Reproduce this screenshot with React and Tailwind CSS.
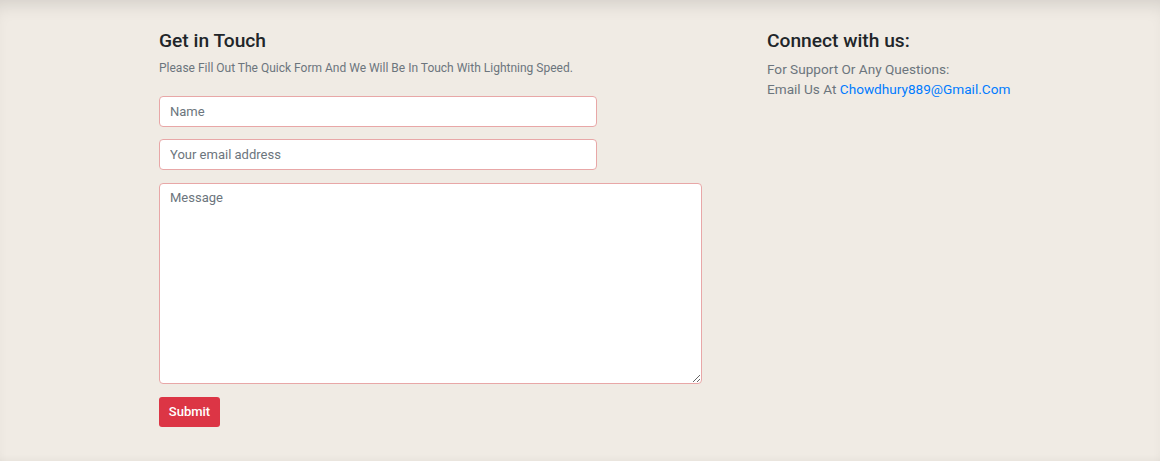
export default function App() {
  return (
    <div
      className="w-full h-[461px] bg-[#f0ebe4] shadow-[inset_0_14px_18px_-10px_rgba(0,0,0,0.13),inset_0_-6px_8px_-6px_rgba(0,0,0,0.06)] flex"
      style={{ fontFamily: "Roboto, 'Liberation Sans', sans-serif" }}
    >
      <div className="pl-[159px] pt-[29px] w-[702px] shrink-0 flex flex-col">
        <h3 className="text-[19.2px] leading-[24px] font-medium text-[#212529]">Get in Touch</h3>
        <p className="mt-[6px] text-[12px] leading-[18px] text-[#6c757d]">
          Please Fill Out The Quick Form And We Will Be In Touch With Lightning Speed.
        </p>
        <form className="mt-[19px] flex flex-col" onSubmit={(e) => e.preventDefault()}>
          <input
            type="text"
            placeholder="Name"
            className="w-[438px] h-[31px] bg-white border border-[#e8a7a7] rounded-[4px] px-[10px] text-[13px] text-[#495057] placeholder:text-[#6c757d] outline-none"
          />
          <input
            type="email"
            placeholder="Your email address"
            className="mt-[12px] w-[438px] h-[31px] bg-white border border-[#e8a7a7] rounded-[4px] px-[10px] text-[13px] text-[#495057] placeholder:text-[#6c757d] outline-none"
          />
          <textarea
            placeholder="Message"
            className="mt-[13px] w-[543px] h-[201px] bg-white border border-[#e8a7a7] rounded-[4px] px-[10px] py-[5px] text-[13px] leading-[18px] text-[#495057] placeholder:text-[#6c757d] outline-none"
          />
          <div className="mt-[13px]">
            <button
              type="submit"
              className="w-[61px] h-[30px] bg-[#dc3545] text-white text-[13px] font-medium rounded-[3px]"
            >
              Submit
            </button>
          </div>
        </form>
      </div>
      <div className="pl-[65px] pt-[29px] flex flex-col">
        <h3 className="text-[19.2px] leading-[24px] font-medium text-[#212529]">Connect with us:</h3>
        <div className="mt-[6px] text-[13.6px] leading-[20px] text-[#6c757d]">
          <p>For Support Or Any Questions:</p>
          <p>
            Email Us At <a href="#" className="text-[#007bff]">Chowdhury889@Gmail.Com</a>
          </p>
        </div>
      </div>
    </div>
  );
}
